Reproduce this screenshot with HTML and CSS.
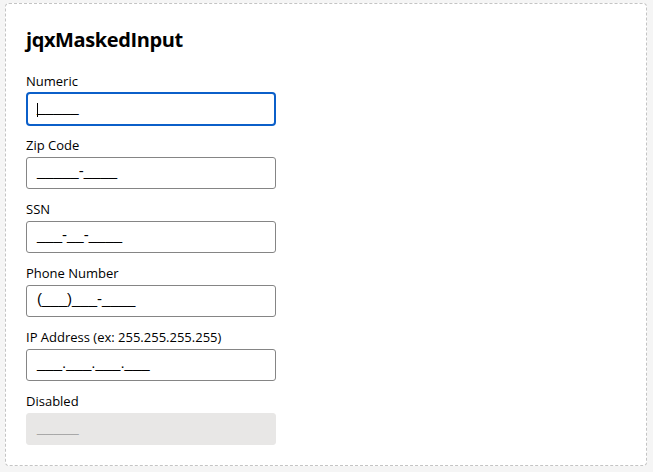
FILE: index.html
```html
<!DOCTYPE html>
<html>
<head>
<meta charset="utf-8">
<link rel="stylesheet" href="styles.css">
</head>
<body>
<div class="panel">
  <h1 class="title">jqxMaskedInput</h1>
  <div class="field">
    <label class="label">Numeric</label>
    <div class="input focused"><span class="caret"></span>_____</div>
  </div>
  <div class="field">
    <label class="label">Zip Code</label>
    <div class="input">_____-____</div>
  </div>
  <div class="field">
    <label class="label">SSN</label>
    <div class="input">___-__-____</div>
  </div>
  <div class="field">
    <label class="label">Phone Number</label>
    <div class="input">(___)___-____</div>
  </div>
  <div class="field">
    <label class="label">IP Address (ex: 255.255.255.255)</label>
    <div class="input">___.___.___.___</div>
  </div>
  <div class="field">
    <label class="label">Disabled</label>
    <div class="input disabled">_____</div>
  </div>
</div>
</body>
</html>
```
FILE: styles.css
```css
html, body {
  margin: 0;
  padding: 0;
  background: #f5f5f5;
}
body {
  font-family: "Open Sans", "Noto Sans", sans-serif;
  color: #000;
}
.panel {
  margin: 3px 6px 6px 5px;
  height: 463px;
  box-sizing: border-box;
  padding: 23px 19px 19px 20px;
  background: #fff;
  border: 1px dashed #c4c4c4;
  border-radius: 4px;
}
.title {
  margin: 0 0 18px;
  font-size: 20px;
  line-height: 26px;
  font-weight: 700;
  letter-spacing: -0.4px;
}
.field {
  display: flex;
  flex-direction: column;
  margin-bottom: 10px;
}
.label {
  font-size: 13px;
  line-height: 20px;
  margin-bottom: 2px;
}
.input {
  width: 250px;
  height: 32px;
  box-sizing: border-box;
  border: 1px solid #858585;
  border-radius: 3px;
  padding: 0 10px;
  font-family: "Liberation Sans", Arial, sans-serif;
  font-size: 15px;
  line-height: 26px;
  white-space: pre;
  position: relative;
}
.input.focused {
  border: 2px solid #0b5fc9;
  border-radius: 4px;
  height: 34px;
  margin-top: -1px;
  margin-bottom: -1px;
  padding-left: 9px;
}
.caret {
  position: absolute;
  left: 9px;
  top: 9px;
  width: 1px;
  height: 14px;
  background: #000;
}
.input.disabled {
  background: #e8e7e6;
  border-color: #e8e7e6;
  color: #a8a8a8;
}
```
